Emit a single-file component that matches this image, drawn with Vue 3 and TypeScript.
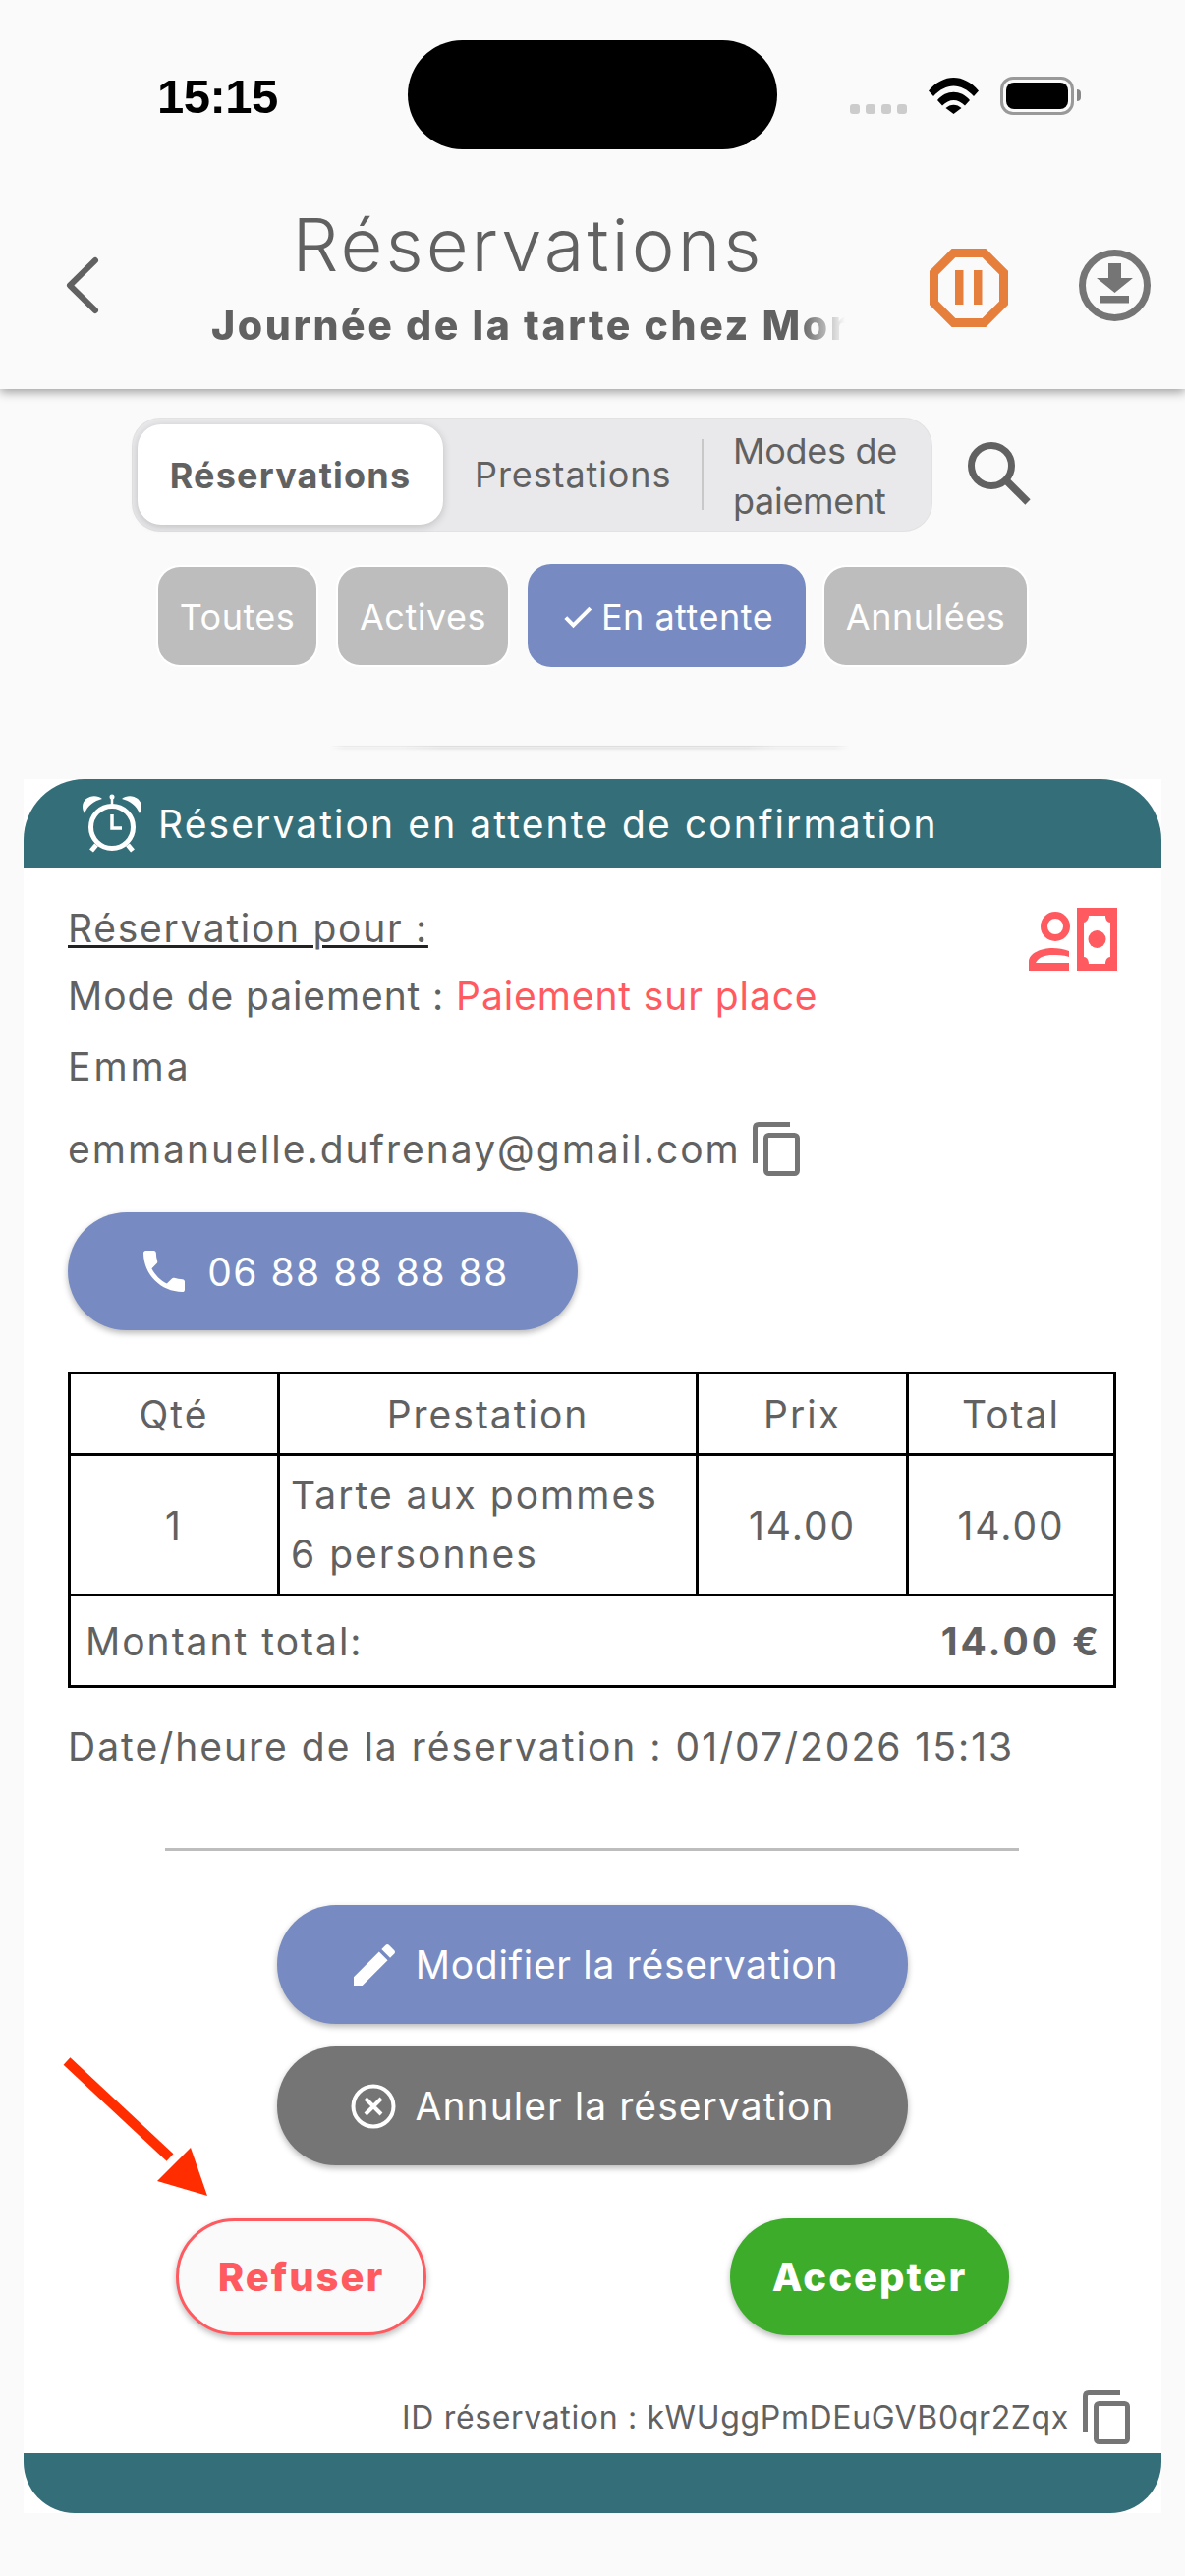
<template>
  <div class="page">
    <header class="app-header">
      <div class="status-bar">
        <span class="time">15:15</span>
        <div class="island"></div>
        <div class="signal">
          <i></i><i></i><i></i><i></i>
        </div>
        <svg class="wifi" viewBox="0 0 51 37">
          <path d="M0 13.5 C15 -4.5 36 -4.5 51 13.5 L46 19 C33 5 18 5 5 19 Z" fill="#000" />
          <path d="M9 23 C18 12 33 12 42 23 L37 28.5 C30 21 21 21 14 28.5 Z" fill="#000" />
          <path d="M17.5 31 C22 26.5 29 26.5 33.5 31 L25.5 37 Z" fill="#000" />
        </svg>
        <div class="battery"><div class="battery-fill"></div></div>
        <div class="battery-nub"></div>
      </div>
      <div class="title-row">
        <svg class="back" viewBox="0 0 36 62">
          <path d="M31 5 L5 30.5 L31 56" fill="none" stroke="#616161" stroke-width="6" stroke-linecap="round" stroke-linejoin="round" />
        </svg>
        <div class="titles">
          <div class="title">Réservations</div>
          <div class="subtitle">Journée de la tarte chez Mon</div>
        </div>
        <svg class="pause" viewBox="0 0 80 80">
          <path d="M24.5 4.5 H55.5 L75.5 24.5 V55.5 L55.5 75.5 H24.5 L4.5 55.5 V24.5 Z" fill="none" stroke="#e67f3c" stroke-width="9" />
          <rect x="26" y="22" width="8.500" height="35" fill="#e67f3c" />
          <rect x="45" y="22" width="8.500" height="35" fill="#e67f3c" />
        </svg>
        <svg class="download" viewBox="0 0 75 75">
          <circle cx="37.500" cy="37.500" r="33" fill="none" stroke="#757575" stroke-width="7" />
          <path d="M31 15 H44 V30 H56 L37.500 45 L19 30 H31 Z" fill="#757575" />
          <rect x="22" y="48" width="30" height="7.500" fill="#757575" />
        </svg>
      </div>
    </header>

    <div class="toolbar">
      <div class="segment">
        <div class="seg-active">Réservations</div>
        <div class="seg-item seg-presta">Prestations</div>
        <div class="seg-sep"></div>
        <div class="seg-item seg-modes">Modes de<br />paiement</div>
      </div>
      <svg class="search" viewBox="0 0 66 66">
        <circle cx="25" cy="25" r="20.500" fill="none" stroke="#616161" stroke-width="7" />
        <path d="M40 40 L62 62" stroke="#616161" stroke-width="7.500" />
      </svg>
    </div>

    <div class="chips">
      <div
        v-for="c in chips"
        :key="c.label"
        class="chip"
        :class="{ selected: c.selected }"
        :style="{ width: c.width + 'px', marginLeft: c.offset + 'px' }"
      >
        <svg v-if="c.selected" class="chip-check" viewBox="0 0 24 24">
          <path d="M9 16.170L4.830 12l-1.420 1.410L9 19 21 7l-1.410-1.410z" fill="#fff" stroke="#fff" stroke-width="0.700" />
        </svg>
        {{ c.label }}
      </div>
    </div>

    <div class="scroll-edge"></div>

    <section class="card">
      <div class="card-head">
        <svg class="alarm" viewBox="0 0 62 60">
          <circle cx="31" cy="34" r="21.500" fill="none" stroke="#fff" stroke-width="5" />
          <path d="M31 21 V35 H41" fill="none" stroke="#fff" stroke-width="3.500" />
          <path d="M1 13 C1 3 14 -1 21 5 C13 7 6 12 3 20 C2 18 1 16 1 13 Z" fill="#fff" />
          <path d="M61 13 C61 3 48 -1 41 5 C49 7 56 12 59 20 C60 18 61 16 61 13 Z" fill="#fff" />
          <circle cx="31" cy="3" r="2.500" fill="#fff" />
          <path d="M31 4 V12" stroke="#fff" stroke-width="2.500" />
          <path d="M15 52 L10 58 M47 52 L52 58" stroke="#fff" stroke-width="5" />
        </svg>
        <span>Réservation en attente de confirmation</span>
      </div>

      <div class="card-body">
        <div class="line first">
          <span class="underlined">Réservation pour :</span>
          <svg class="money" viewBox="0 0 90 64">
            <circle cx="27" cy="19" r="11.500" fill="none" stroke="#ff5a5f" stroke-width="7" />
            <path fill-rule="evenodd" d="M0 64 V55 C0 46 13 41 24 41 C30 41 36 42 41 44 V64 Z M7 56 H41 V50 C35 48 29 48 24 48 C17 48 10 50 7 56 Z" fill="#ff5a5f" />
            <path fill-rule="evenodd" d="M49 0 H90 V64 H49 Z M61 8 C61 12 58 15 56 15 V50 C59 50 61 53 61 57 H78 C78 53 80 50 83 50 V15 C80 15 78 12 78 8 Z" fill="#ff5a5f" />
            <circle cx="69.500" cy="32" r="9" fill="#ff5a5f" />
          </svg>
        </div>
        <div class="line mode">Mode de paiement : <span class="pay">Paiement sur place</span></div>
        <div class="line name">Emma</div>
        <div class="line email">
          <span>emmanuelle.dufrenay@gmail.com</span>
          <svg class="copy" viewBox="0 0 48 55">
            <path d="M38 2.500 H6 Q2.500 2.500 2.500 6 V42" fill="none" stroke="#757575" stroke-width="5" />
            <rect x="13.500" y="13.500" width="32" height="39" rx="3" fill="none" stroke="#757575" stroke-width="5" />
          </svg>
        </div>

        <button class="pill phone">
          <svg class="btn-icon" viewBox="0 0 24 24">
            <path d="M6.620 10.790c1.440 2.830 3.760 5.140 6.590 6.590l2.200-2.200c.27-.27.67-.36 1.020-.24 1.120.37 2.330.57 3.570.57.55 0 1 .45 1 1V20c0 .55-.45 1-1 1-9.390 0-17-7.610-17-17 0-.55.45-1 1-1h3.500c.55 0 1 .45 1 1 0 1.250.2 2.450.57 3.570.11.35.03.74-.25 1.020l-2.200 2.200z" fill="#fff" />
          </svg>
          06 88 88 88 88
        </button>

        <table class="items">
          <colgroup>
            <col style="width: 213px" />
            <col style="width: 426px" />
            <col style="width: 214px" />
            <col />
          </colgroup>
          <thead>
            <tr class="row-head">
              <th>Qté</th>
              <th>Prestation</th>
              <th>Prix</th>
              <th>Total</th>
            </tr>
          </thead>
          <tbody>
            <tr class="row-item">
              <td>1</td>
              <td class="item-name">Tarte aux pommes<br />6 personnes</td>
              <td>14.00</td>
              <td>14.00</td>
            </tr>
            <tr class="row-total">
              <td colspan="4">
                <div class="total-inner">
                  <span>Montant total:</span>
                  <strong>14.00 €</strong>
                </div>
              </td>
            </tr>
          </tbody>
        </table>

        <div class="line date">Date/heure de la réservation : 01/07/2026 15:13</div>
        <div class="divider"></div>

        <button class="pill wide edit">
          <svg class="btn-icon" viewBox="0 0 24 24">
            <path d="M3 17.250V21h3.750L17.810 9.940l-3.750-3.750L3 17.250zM20.710 7.040c.39-.39.39-1.020 0-1.410l-2.340-2.340c-.39-.39-1.020-.39-1.410 0l-1.830 1.830 3.750 3.750 1.830-1.830z" fill="#fff" />
          </svg>
          Modifier la réservation
        </button>
        <button class="pill wide cancel">
          <svg class="cancel-icon" viewBox="0 0 46 46">
            <circle cx="23" cy="23" r="20.500" fill="none" stroke="#fff" stroke-width="4" />
            <path d="M15 15 L31 31 M31 15 L15 31" stroke="#fff" stroke-width="4" />
          </svg>
          Annuler la réservation
        </button>

        <div class="decision">
          <button class="pill refuse">Refuser</button>
          <button class="pill accept">Accepter</button>
        </div>

        <div class="ref-row">
          <span>ID réservation : kWUggPmDEuGVB0qr2Zqx</span>
          <svg class="copy small" viewBox="0 0 48 55">
            <path d="M38 2.500 H6 Q2.500 2.500 2.500 6 V42" fill="none" stroke="#757575" stroke-width="5" />
            <rect x="13.500" y="13.500" width="32" height="39" rx="3" fill="none" stroke="#757575" stroke-width="5" />
          </svg>
        </div>
      </div>
      <div class="card-foot"></div>
    </section>

    <!-- annotation arrow drawn over the screenshot -->
    <svg class="arrow" viewBox="0 0 160 150">
      <path d="M5 5 L110 103" stroke="#ff2d00" stroke-width="10" />
      <path d="M148 142 L131 93 L97 127 Z" fill="#ff2d00" />
    </svg>
  </div>
</template>

<script setup lang="ts">
const chips = [
  { label: 'Toutes', width: 161, offset: 0, selected: false },
  { label: 'Actives', width: 173, offset: 22, selected: false },
  { label: 'En attente', width: 283, offset: 20, selected: true },
  { label: 'Annulées', width: 206, offset: 19, selected: false }
]
</script>

<style>
html,
body {
  margin: 0;
  background: #fafafa;
}
</style>

<style scoped>
.page {
  position: relative;
  width: 1206px;
  height: 2622px;
  overflow: hidden;
  background: #fafafa;
  font-family: Inter, "Noto Sans", sans-serif;
  color: #616161;
}

.app-header {
  height: 396px;
  box-sizing: border-box;
  padding-top: 41px;
  background: #fafafa;
  box-shadow: 0 3px 10px rgba(0, 0, 0, 0.38);
}

.status-bar {
  display: flex;
  height: 111px;
  padding-left: 160px;
  position: relative;
}

.time {
  width: 255px;
  font-size: 49px;
  line-height: 115px;
  font-weight: 700;
  color: #000;
  font-family: "Liberation Sans", sans-serif;
  letter-spacing: -0.5px;
}

.island {
  width: 376px;
  height: 111px;
  border-radius: 56px;
  background: #000;
}

.signal {
  display: flex;
  gap: 6px;
  margin: 65px 0 0 74px;
}

.signal i {
  width: 10px;
  height: 10px;
  border-radius: 3px;
  background: #ccc;
}

.wifi {
  width: 51px;
  height: 37px;
  margin: 38px 0 0 22px;
}

.battery {
  box-sizing: border-box;
  width: 75px;
  height: 39px;
  margin: 37px 0 0 22px;
  padding: 3px;
  border: 3px solid #999;
  border-radius: 13px;
  background: #fafafa;
}

.battery-fill {
  height: 100%;
  border-radius: 8px;
  background: #000;
}

.battery-nub {
  width: 4px;
  height: 12px;
  margin: 50px 0 0 3px;
  border-radius: 0 6px 6px 0;
  background: #888;
}

.title-row {
  display: flex;
  align-items: flex-start;
  height: 200px;
  position: relative;
}

.back {
  width: 36px;
  height: 62px;
  margin: 108px 0 0 66px;
}

.titles {
  width: 645px;
  margin-left: 113px;
  text-align: center;
}

.title {
  margin-top: 53px;
  font-size: 74px;
  line-height: 88px;
  font-weight: 300;
  letter-spacing: 3px;
  color: #616161;
}

.subtitle {
  width: 645px;
  margin-top: 11px;
  overflow: hidden;
  white-space: nowrap;
  font-size: 41px;
  line-height: 54px;
  font-weight: 800;
  letter-spacing: 2.6px;
  text-align: left;
  color: #616161;
  -webkit-mask-image: linear-gradient(90deg, #000 93%, transparent 100%);
  mask-image: linear-gradient(90deg, #000 93%, transparent 100%);
}

.pause {
  width: 80px;
  height: 80px;
  margin: 101px 0 0 86px;
}

.download {
  width: 75px;
  height: 75px;
  margin: 101px 0 0 71px;
}

.toolbar {
  display: flex;
  align-items: flex-start;
  gap: 36px;
  margin-top: 30px;
  padding-left: 135px;
}

.segment {
  display: flex;
  align-items: center;
  box-sizing: border-box;
  width: 813px;
  height: 114px;
  padding: 0 5px;
  border-radius: 28px;
  background: #e9e9eb;
  box-shadow: 0 0 0 1px #e2e2e2;
  font-size: 36px;
}

.seg-active {
  box-sizing: border-box;
  width: 311px;
  height: 102px;
  border-radius: 24px;
  background: #fff;
  box-shadow: 0 2px 8px rgba(0, 0, 0, 0.18);
  text-align: center;
  line-height: 104px;
  font-weight: 700;
  letter-spacing: 1.200px;
}

.seg-item {
  color: #616161;
}

.seg-presta {
  margin-left: 32px;
  width: 199px;
  line-height: 104px;
  letter-spacing: 0.900px;
}

.seg-sep {
  width: 2px;
  height: 72px;
  margin-left: 32px;
  background: #c8c8c8;
}

.seg-modes {
  margin-left: 30px;
  padding-top: 3px;
  line-height: 51px;
  letter-spacing: -0.300px;
}

.search {
  width: 66px;
  height: 66px;
  margin-top: 23px;
}

.chips {
  display: flex;
  align-items: center;
  margin-top: 34px;
  padding-left: 161px;
  height: 105px;
}

.chip {
  display: flex;
  align-items: center;
  justify-content: center;
  box-sizing: border-box;
  height: 100px;
  padding-top: 2px;
  border-radius: 22px;
  background: #bdbdbd;
  box-shadow: 0 0 0 2px #fff;
  color: #fff;
  font-size: 36px;
  letter-spacing: 0.500px;
}

.chip.selected {
  height: 105px;
  border-radius: 24px;
  background: #778bc2;
  box-shadow: none;
  gap: 6px;
}

.chip-check {
  width: 36px;
  height: 36px;
}

.scroll-edge {
  width: 540px;
  height: 1px;
  margin: 80px 0 0 330px;
  background: #dedede;
  border-radius: 50%;
  box-shadow: 0 2px 3px rgba(0, 0, 0, 0.25);
}

.card {
  width: 1158px;
  margin: 33px 0 0 24px;
  background: #fff;
}

.card-head {
  display: flex;
  align-items: center;
  gap: 16px;
  box-sizing: border-box;
  height: 90px;
  padding-left: 59px;
  border-radius: 62px 62px 0 0;
  background: #346f79;
  color: #fff;
  font-size: 39px;
  letter-spacing: 2.100px;
}

.alarm {
  width: 62px;
  height: 60px;
}

.card-body {
  padding: 32px 45px 0;
}

.line {
  font-size: 39px;
  line-height: 60px;
  letter-spacing: 2px;
}

.first {
  display: flex;
  justify-content: space-between;
  height: 60px;
  letter-spacing: 1.700px;
}

.underlined {
  text-decoration: underline;
  text-decoration-color: #222;
  text-decoration-thickness: 2.500px;
  text-underline-offset: 3px;
}

.money {
  width: 90px;
  height: 64px;
  margin-top: 9px;
}

.mode {
  margin-top: 9px;
  letter-spacing: 0.900px;
}

.pay {
  color: #ff5a5f;
}

.name {
  margin-top: 12px;
  letter-spacing: 3px;
}

.email {
  display: flex;
  align-items: center;
  gap: 12px;
  margin-top: 24px;
}

.copy {
  width: 48px;
  height: 55px;
  margin-top: -2px;
}

.pill {
  display: flex;
  align-items: center;
  justify-content: center;
  box-sizing: border-box;
  border: none;
  padding: 0;
  border-radius: 60px;
  font-family: inherit;
  font-size: 39px;
  color: #fff;
  box-shadow: 0 3px 6px rgba(0, 0, 0, 0.28);
}

.phone {
  gap: 16px;
  width: 519px;
  height: 120px;
  margin-top: 34px;
  background: #778bc2;
  letter-spacing: 1.500px;
}

.btn-icon {
  width: 56px;
  height: 56px;
}

.cancel-icon {
  width: 46px;
  height: 46px;
}

.items {
  width: 1067px;
  height: 319px;
  margin-top: 42px;
  border-collapse: collapse;
  table-layout: fixed;
  font-size: 39px;
  letter-spacing: 2px;
}

.items th,
.items td {
  padding: 0;
  border: 3px solid #000;
  text-align: center;
  font-weight: 400;
  color: #616161;
}

.row-head {
  height: 83px;
}

.row-item {
  height: 143px;
}

.row-total {
  height: 93px;
}

.items .item-name {
  padding-left: 11px;
  text-align: left;
  line-height: 60px;
}

.total-inner {
  display: flex;
  justify-content: space-between;
  padding: 0 12px 0 15px;
}

.total-inner strong {
  font-weight: 700;
  letter-spacing: 3px;
}

.date {
  margin-top: 30px;
}

.divider {
  width: 869px;
  height: 3px;
  margin: 73px 0 0 99px;
  background: #bdbdbd;
}

.wide {
  width: 642px;
  height: 121px;
  margin-left: 213px;
}

.edit {
  gap: 14px;
  margin-top: 55px;
  background: #778bc2;
  letter-spacing: 0.700px;
}

.cancel {
  gap: 20px;
  margin-top: 23px;
  background: #757575;
  letter-spacing: 1.050px;
}

.decision {
  display: flex;
  margin-top: 54px;
  padding-left: 110px;
}

.refuse {
  width: 255px;
  height: 119px;
  border: 3px solid #ff5a5f;
  background: #fafafa;
  color: #ff5a5f;
  font-size: 40px;
  font-weight: 800;
  letter-spacing: 2px;
}

.accept {
  width: 284px;
  height: 119px;
  margin-left: 309px;
  background: #3dac2b;
  font-size: 40px;
  font-weight: 800;
  letter-spacing: 2px;
}

.ref-row {
  display: flex;
  align-items: center;
  justify-content: flex-end;
  gap: 14px;
  height: 60px;
  margin: 53px -13px 0 0;
  font-size: 32px;
  letter-spacing: 0.650px;
}

.copy.small {
  margin: 0;
}

.card-foot {
  height: 61px;
  margin-top: 7px;
  border-radius: 0 0 52px 52px;
  background: #346f79;
}

.arrow {
  position: absolute;
  left: 63px;
  top: 2093px;
  width: 160px;
  height: 150px;
}
</style>
